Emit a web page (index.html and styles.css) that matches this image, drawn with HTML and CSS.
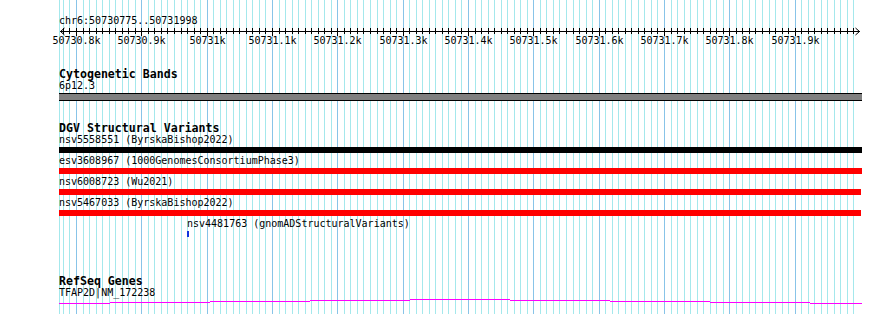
FILE: index.html
```html
<!DOCTYPE html>
<html lang="en">

<head>
    <meta charset="UTF-8">
    <title>chr6:50730775..50731998</title>
    <link rel="stylesheet" href="styles.css">
</head>

<body>
    <div class="view">
        <svg class="grid" id="grid" width="890" height="314"></svg>

        <div class="ruler">
            <div class="loc">chr6:50730775..50731998</div>
            <svg class="axis" id="axis" width="890" height="22"></svg>
        </div>

        <div class="track cyto">
            <div class="ttl">Cytogenetic Bands</div>
            <div class="lbl">6p12.3</div>
            <div class="band"></div>
        </div>

        <div class="track dgv">
            <div class="ttl">DGV Structural Variants</div>
            <div class="ft">
                <div class="lbl">nsv5558551 (ByrskaBishop2022)</div>
                <div class="bar black"></div>
            </div>
            <div class="ft">
                <div class="lbl">esv3608967 (1000GenomesConsortiumPhase3)</div>
                <div class="bar red"></div>
            </div>
            <div class="ft">
                <div class="lbl">nsv6008723 (Wu2021)</div>
                <div class="bar red short"></div>
            </div>
            <div class="ft">
                <div class="lbl">nsv5467033 (ByrskaBishop2022)</div>
                <div class="bar red short"></div>
            </div>
            <div class="ft pt">
                <div class="lbl">nsv4481763 (gnomADStructuralVariants)</div>
                <div class="mark"></div>
            </div>
        </div>

        <div class="track genes">
            <div class="ttl">RefSeq Genes</div>
            <div class="lbl">TFAP2D|NM_172238</div>
            <svg class="gene" id="gene" width="803" height="6"></svg>
        </div>
    </div>

    <script>
        const ns = 'http://www.w3.org/2000/svg';
        const st = 50730775, px = 0.6533, x0 = 59.7;

        function bx(bp) {
            return Math.round(x0 + (bp - st) * px);
        }

        function mk(tag, at) {
            const e = document.createElementNS(ns, tag);
            for (const k in at) e.setAttribute(k, at[k]);
            return e;
        }

        function dgrid() {
            const g = document.getElementById('grid');
            g.appendChild(mk('line', { x1: 59.5, y1: 0, x2: 59.5, y2: 314, class: 'mn' }));
            for (let bp = 50730780; bp < 50732000; bp += 10) {
                const x = bx(bp) + 0.5;
                g.appendChild(mk('line', { x1: x, y1: 0, x2: x, y2: 314, class: bp % 100 === 0 ? 'mj' : 'mn' }));
            }
        }

        function daxis() {
            const a = document.getElementById('axis');
            a.appendChild(mk('line', { x1: 60, y1: 5.5, x2: 860, y2: 5.5, class: 'ax' }));
            a.appendChild(mk('polyline', { points: '64.5,2 60.5,5.5 64.5,9', class: 'ax' }));
            a.appendChild(mk('polyline', { points: '855.5,2 859.5,5.5 855.5,9', class: 'ax' }));
            for (let bp = 50730780; bp < 50732000; bp += 10) {
                const x = bx(bp) + 0.5;
                const mj = bp % 100 === 0;
                a.appendChild(mk('line', { x1: x, y1: 2, x2: x, y2: mj ? 10 : 8, class: 'ax' }));
                if (mj) {
                    const t = mk('text', { x: x, y: 17.5, class: 'tk' });
                    const k = (bp / 1000).toFixed(1).replace(/\.0$/, '');
                    t.textContent = k + 'k';
                    a.appendChild(t);
                }
            }
        }

        function dgene() {
            const g = document.getElementById('gene');
            const ys = [5, 4, 3, 2, 1, 2, 3, 4, 5];
            const xs = [59, 110, 210, 310, 410, 510, 610, 710, 810, 862];
            ys.forEach((y, i) => {
                g.appendChild(mk('line', { x1: xs[i] - 59, y1: y + 0.5, x2: xs[i + 1] - 59, y2: y + 0.5, class: 'gl' }));
            });
        }

        dgrid();
        daxis();
        dgene();
    </script>
</body>

</html>
```

FILE: styles.css
```css
body {
    margin: 0;
    padding: 0;
    background: #fff;
    color: #000;
    font-family: "DejaVu Sans Mono", "Liberation Mono", monospace;
    font-size: 10px;
}

.view {
    position: relative;
    width: 890px;
    height: 314px;
    overflow: hidden;
}

.grid {
    position: absolute;
    top: 0;
    left: 0;
}

.grid .mn {
    stroke: #a4e8ec;
    stroke-width: 1;
}

.grid .mj {
    stroke: #88c4e8;
    stroke-width: 1;
}

.ruler,
.track {
    position: relative;
}

.ruler {
    padding-top: 16px;
}

.loc {
    padding-left: 59px;
    line-height: 10px;
}

.axis {
    display: block;
}

.axis .ax {
    stroke: #000;
    stroke-width: 1;
    fill: none;
}

.axis .tk {
    font-family: "DejaVu Sans Mono", monospace;
    font-size: 10px;
    text-anchor: middle;
    fill: #000;
}

.track {
    padding-left: 59px;
}

.ttl {
    font-size: 11.6px;
    font-weight: bold;
    line-height: 12px;
    margin-bottom: 1px;
}

.lbl {
    line-height: 10px;
    white-space: nowrap;
}

.cyto {
    margin-top: 20px;
}

.band {
    width: 803px;
    height: 6px;
    margin-top: 2px;
    background: #808080;
    border-top: 1px solid #000;
    border-bottom: 1px solid #000;
}

.dgv {
    margin-top: 21px;
}

.ft + .ft {
    margin-top: 3px;
}

.bar {
    width: 803px;
    height: 6px;
    margin-top: 2px;
}

.bar.short {
    width: 802px;
}

.bar.black {
    background: #000;
}

.bar.red {
    background: #ff0000;
}

.ft.pt {
    padding-left: 128px;
}

.mark {
    width: 2px;
    height: 6px;
    margin-top: 2px;
    background: #1133dd;
}

.genes {
    margin-top: 38px;
}

.gene {
    display: block;
}

.gene .gl {
    stroke: #ff00ff;
    stroke-width: 1;
}
```
